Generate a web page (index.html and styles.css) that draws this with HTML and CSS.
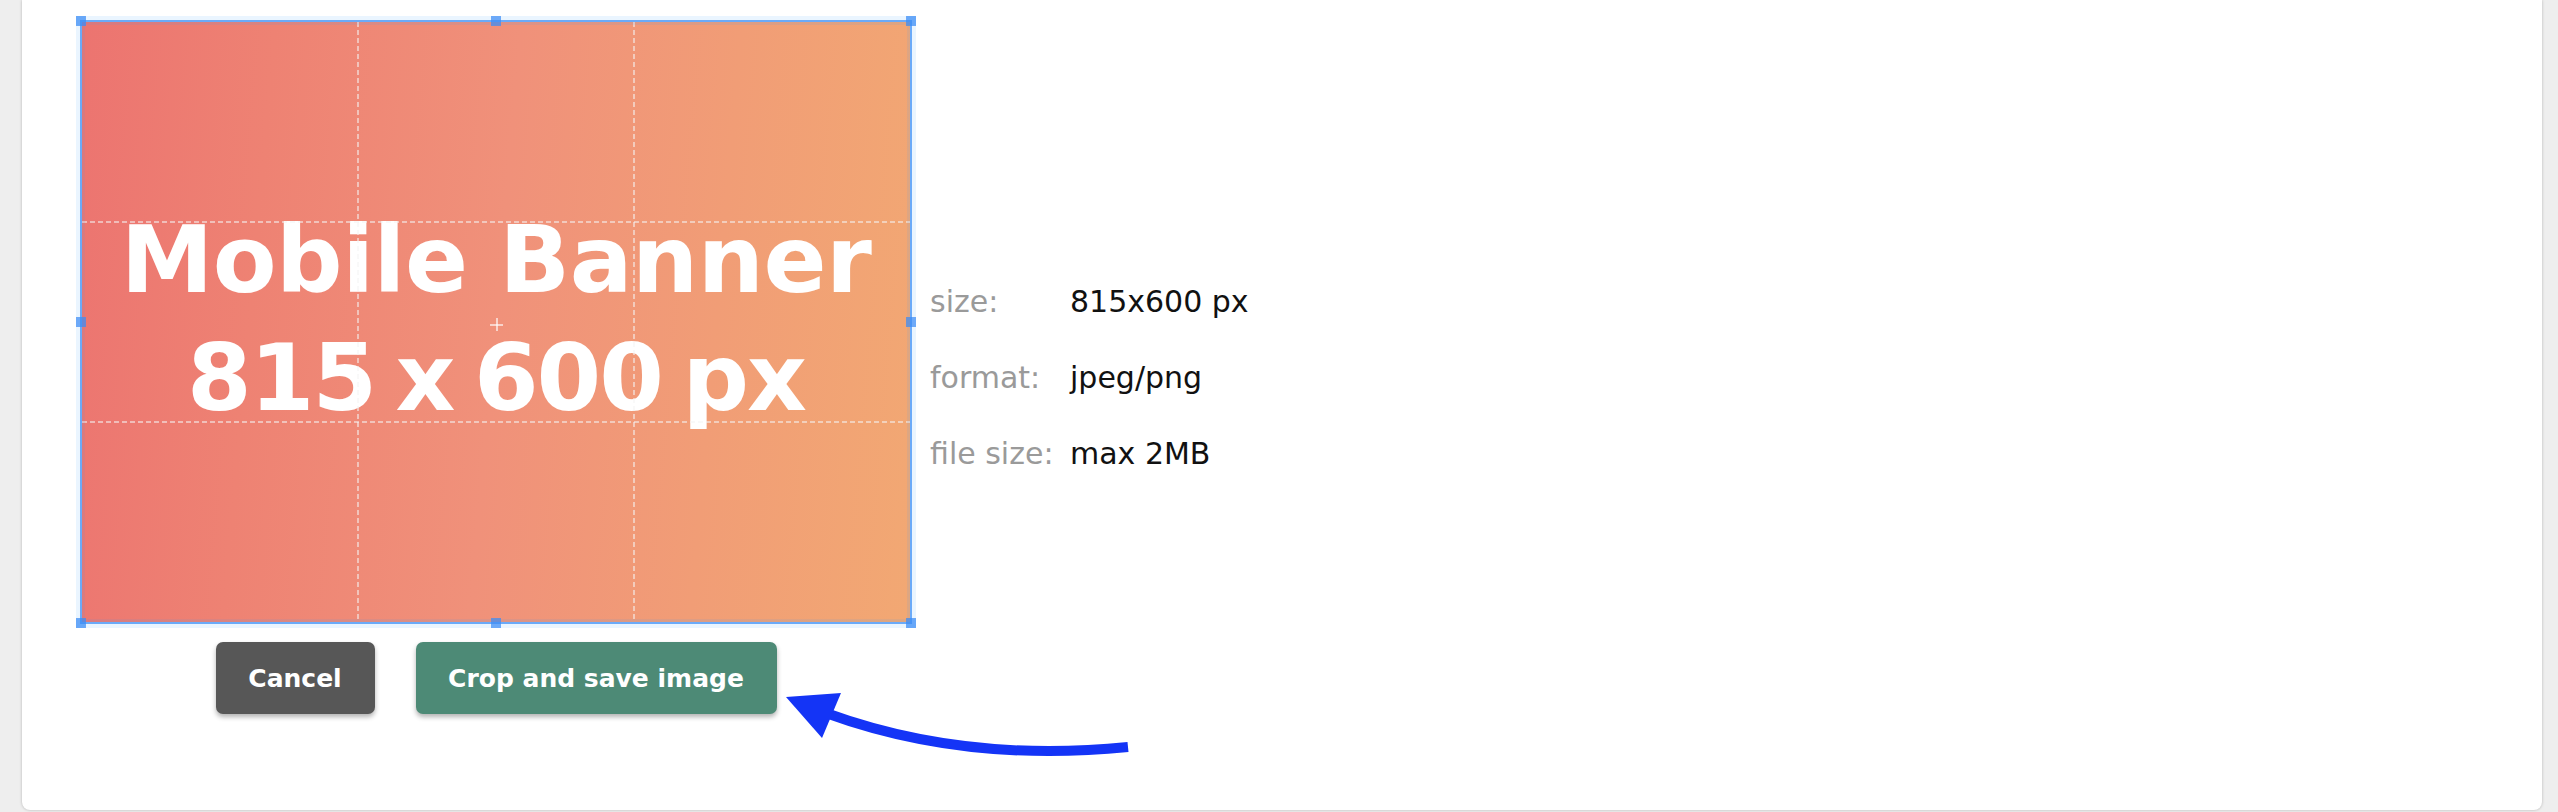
FILE: index.html
```html
<!DOCTYPE html>
<html lang="en">
<head>
<meta charset="utf-8">
<title>Crop image</title>
<link rel="stylesheet" href="styles.css">
</head>
<body>
<div class="card">
  <div class="editor">
    <div class="crop-col">
      <div class="cropper">
        <div class="banner">
          <div class="banner-text">Mobile Banner<br><span class="banner-size">815 x 600 px</span></div>
        </div>
        <span class="dash dash-v dash-v1"></span>
        <span class="dash dash-v dash-v2"></span>
        <span class="dash dash-h dash-h1"></span>
        <span class="dash dash-h dash-h2"></span>
        <span class="center center-h"></span>
        <span class="center center-v"></span>
        <span class="line line-n"></span>
        <span class="line line-s"></span>
        <span class="line line-w"></span>
        <span class="line line-e"></span>
        <span class="point p-nw"></span>
        <span class="point p-n"></span>
        <span class="point p-ne"></span>
        <span class="point p-w"></span>
        <span class="point p-e"></span>
        <span class="point p-sw"></span>
        <span class="point p-s"></span>
        <span class="point p-se"></span>
      </div>
      <div class="actions">
        <button class="btn btn-cancel">Cancel</button>
        <button class="btn btn-save">Crop and save image</button>
      </div>
    </div>
    <dl class="info">
      <dt>size:</dt><dd>815x600 px</dd>
      <dt>format:</dt><dd>jpeg/png</dd>
      <dt>file size:</dt><dd>max 2MB</dd>
    </dl>
  </div>
  <svg class="arrow" viewBox="770 680 380 90" width="380" height="90">
    <path d="M 826 713 C 900 740, 1000 760, 1128 747" fill="none" stroke="#1434f6" stroke-width="10"/>
    <polygon points="786,697 841,693 822,738" fill="#1434f6"/>
  </svg>
</div>
</body>
</html>
```

FILE: styles.css
```css
html, body {
  margin: 0;
  height: 812px;
  overflow: hidden;
}
body {
  background: #eeeeee;
  padding: 0 16px 0 22px;
  box-sizing: border-box;
  font-family: "DejaVu Sans", "Liberation Sans", sans-serif;
}
.card {
  position: relative;
  height: 810px;
  background: #ffffff;
  border-radius: 0 0 8px 8px;
  box-shadow: 0 0 3px rgba(0, 0, 0, 0.25);
  padding: 22px 0 0 60px;
  box-sizing: border-box;
}
.editor {
  display: flex;
  align-items: flex-start;
}
.crop-col {
  display: flex;
  flex-direction: column;
}
.cropper {
  position: relative;
  width: 828px;
  height: 600px;
  outline: 2px solid rgba(60, 140, 245, 0.72);
}
.banner {
  width: 100%;
  height: 100%;
  background: linear-gradient(95deg, #ec7470 0%, #ee8273 22%, #f0917a 50%, #f19d76 75%, #f2a873 100%);
  display: flex;
  align-items: center;
  justify-content: center;
  padding-bottom: 6px;
  box-sizing: border-box;
}
.banner-text {
  color: #ffffff;
  font-family: "DejaVu Sans", sans-serif;
  font-weight: bold;
  font-size: 93px;
  line-height: 118px;
  text-align: center;
  letter-spacing: -0.5px;
}
.banner-size {
  letter-spacing: -2px;
  word-spacing: -10px;
}
.dash {
  position: absolute;
  opacity: 0.55;
}
.dash-v {
  top: 0;
  bottom: 0;
  width: 2px;
  margin-left: -1px;
  background: repeating-linear-gradient(180deg, #f4f4f4 0 5px, transparent 5px 8px);
}
.dash-v1 { left: 33.333%; }
.dash-v2 { left: 66.667%; }
.dash-h {
  left: 0;
  right: 0;
  height: 2px;
  margin-top: -1px;
  background: repeating-linear-gradient(90deg, #f4f4f4 0 5px, transparent 5px 8px);
}
.dash-h1 { top: 33.333%; }
.dash-h2 { top: 66.667%; }
.center {
  position: absolute;
  background: rgba(255, 255, 255, 0.6);
}
.center-h {
  left: calc(50% - 6px);
  top: calc(50% + 2px);
  width: 13px;
  height: 2px;
}
.center-v {
  left: calc(50%);
  top: calc(50% - 4px);
  width: 2px;
  height: 13px;
}
.line {
  position: absolute;
  background: rgba(51, 153, 255, 0.1);
}
.line-n { top: -6px; left: -6px; right: -6px; height: 9px; }
.line-s { bottom: -6px; left: -6px; right: -6px; height: 9px; }
.line-w { left: -6px; top: -6px; bottom: -6px; width: 9px; }
.line-e { right: -6px; top: -6px; bottom: -6px; width: 9px; }
.point {
  position: absolute;
  width: 10px;
  height: 10px;
  background: rgba(60, 140, 245, 0.72);
}
.p-nw { left: -6px; top: -6px; }
.p-n { left: calc(50% - 5px); top: -6px; }
.p-ne { right: -6px; top: -6px; }
.p-w { left: -6px; top: calc(50% - 5px); }
.p-e { right: -6px; top: calc(50% - 5px); }
.p-sw { left: -6px; bottom: -6px; }
.p-s { left: calc(50% - 5px); bottom: -6px; }
.p-se { right: -6px; bottom: -6px; }
.actions {
  display: flex;
  justify-content: center;
  gap: 41px;
  margin-top: 20px;
}
.btn {
  height: 72px;
  border: none;
  border-radius: 7px;
  color: #ffffff;
  font-family: "DejaVu Sans", sans-serif;
  font-weight: bold;
  font-size: 25px;
  padding: 0 32px;
  box-shadow: 0 3px 5px rgba(0, 0, 0, 0.3);
}
.btn-cancel {
  background: #575757;
  width: 159px;
}
.btn-save {
  background: #4d8a76;
  width: 361px;
}
.info {
  margin: 242px 0 0 20px;
  display: grid;
  grid-template-columns: 140px auto;
  font-family: "DejaVu Sans", sans-serif;
  font-size: 30px;
  line-height: 76px;
}
.info dt {
  color: #9a9a9a;
}
.info dd {
  margin: 0;
  color: #111111;
}
.arrow {
  position: absolute;
  left: 748px;
  top: 680px;
}
```
